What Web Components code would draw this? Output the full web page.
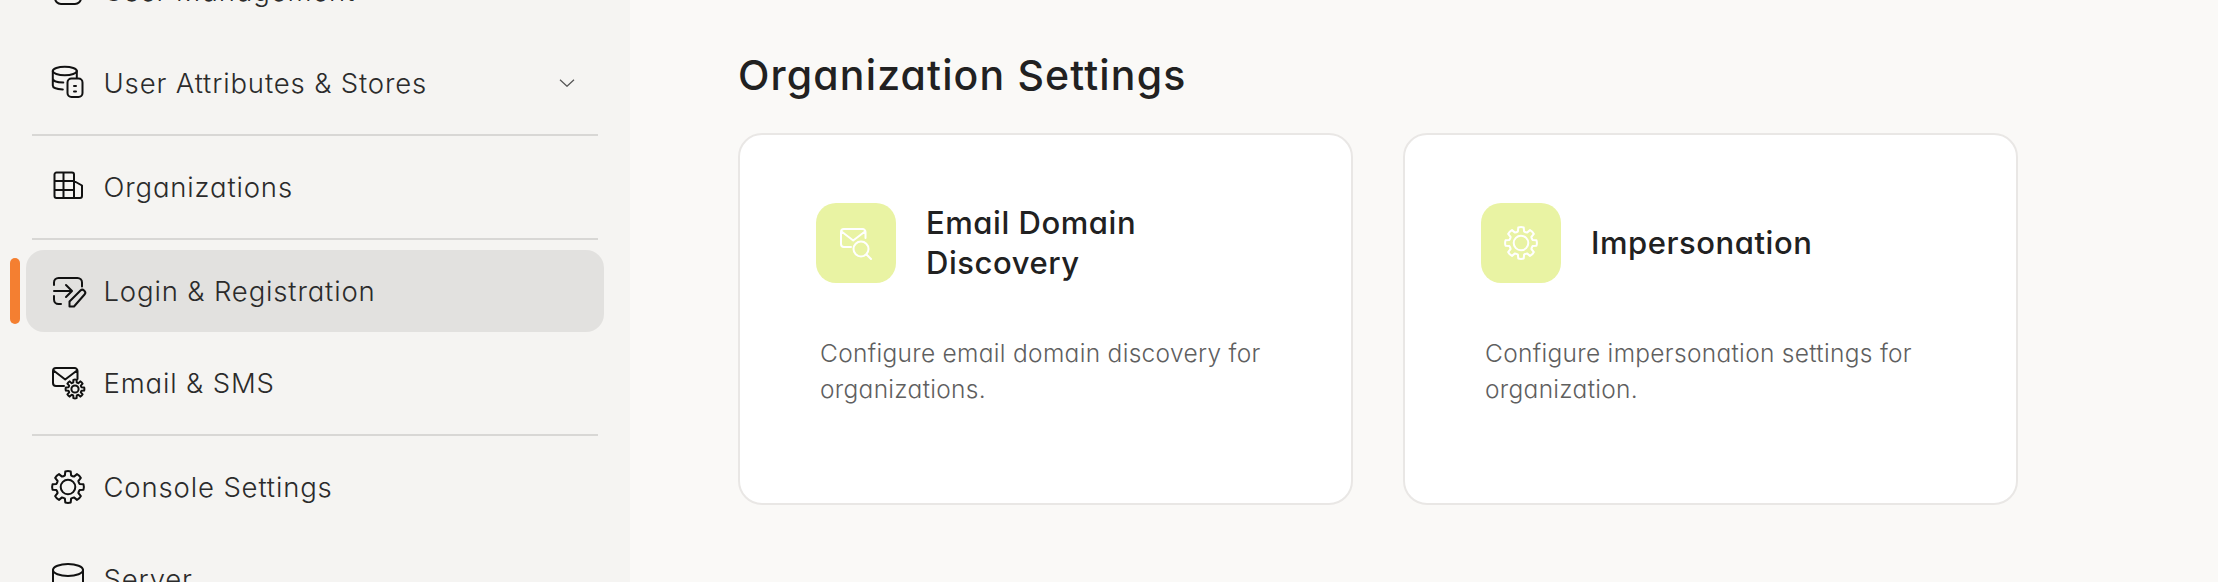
<!DOCTYPE html>
<html><head><meta charset="utf-8"><title>Organization Settings</title>
<style>
html,body{margin:0;padding:0;height:100%;overflow:hidden;background:#faf9f7}
body{font-family:"Inter","Liberation Sans",sans-serif;font-feature-settings:"cv11","ss03";color:#262626}
</style></head>
<body>
<app-shell>
  <side-bar slot="side">
    <nav-item icon="user" label="User Management"></nav-item>
    <nav-item icon="attrs" label="User Attributes &amp; Stores" chevron></nav-item>
    <nav-sep></nav-sep>
    <nav-item icon="org" label="Organizations"></nav-item>
    <nav-sep></nav-sep>
    <nav-item icon="login" label="Login &amp; Registration" active></nav-item>
    <nav-item icon="mail" label="Email &amp; SMS"></nav-item>
    <nav-sep></nav-sep>
    <nav-item icon="gear" label="Console Settings"></nav-item>
    <nav-item icon="server" label="Server"></nav-item>
  </side-bar>
  <settings-page heading="Organization Settings">
    <settings-card icon="mailsearch" title-text="Email Domain Discovery" desc="Configure email domain discovery for organizations."></settings-card>
    <settings-card icon="gear" title-text="Impersonation" desc="Configure impersonation settings for organization."></settings-card>
  </settings-page>
</app-shell>
<script>
function gear(cx,cy,ro,ri,hole){
  const P=(r,d)=>{const t=(d-90)*Math.PI/180;return (cx+r*Math.cos(t)).toFixed(2)+' '+(cy+r*Math.sin(t)).toFixed(2)};
  let d='';
  for(let i=0;i<8;i++){
    const a=i*45;
    d+=(i?'L':'M')+P(ri,a-15)+'L'+P(ro,a-10)+'Q'+P(ro*1.04,a)+' '+P(ro,a+10)+'L'+P(ri,a+15)+'Q'+P(ri*.96,a+22.5)+' '+P(ri,a+30);
  }
  d+='Z';
  return `<path d="${d}"/><circle cx="${cx}" cy="${cy}" r="${hole}"/>`;
}
const ICONS={
  user:`<path d="M4 12v12a6 6 0 0 0 6 6h14a6 6 0 0 0 6-6V12"/>`,
  attrs:`<ellipse cx="13.8" cy="5" rx="12" ry="4.2"/><path d="M1.8 5v14.5c0 2 3.5 3.800 10 4M1.800 12.500c0 2.200 3.800 4 10.500 4M25.800 5v6.500"/><rect x="16.500" y="12.500" width="15" height="18.500" rx="4"/><path d="M23 20h2M23 25.500h2"/>`,
  org:`<path d="M23 11V4.500a2 2 0 0 0-2-2H5.500a2 2 0 0 0-2 2V26a2 2 0 0 0 2 2H29a2 2 0 0 0 2-2V15.500L23 11ZM23 11V28M12.500 2.500V28M3.500 11H23M3.500 20H23"/>`,
  login:`<path d="M3 11V8.500A4.500 4.500 0 0 1 7.500 4h19A4.500 4.500 0 0 1 31 8.500v4M3 22v3.500A4.500 4.500 0 0 0 7.500 30H10M3 17h17.500M15 11l6 6-6 6"/><path d="M18.500 32.500v-5L29.500 16.500a2.500 2.500 0 0 1 3.500 0l.5.5a2.500 2.500 0 0 1 0 3.500L23 32.500Z"/>`,
  mail:`<path d="M13 20H5a3 3 0 0 1-3-3V5a3 3 0 0 1 3-3h18.500a3 3 0 0 1 3 3v8M2.500 4.500 14.200 13.500 26 4.500"/>${gear(24,23,9.300,6.700,3.600)}`,
  mailsearch:`<path d="M12 21H5a3 3 0 0 1-3-3V6a3 3 0 0 1 3-3h18.500a3 3 0 0 1 3 3v6M2.500 5.500 14.200 14.500 26 5.500"/><circle cx="22" cy="23" r="7.500"/><path d="M27.500 28.500 32 33"/>`,
  gear:gear(17,17,15.700,12,7.300),
  server:`<ellipse cx="17" cy="8" rx="15" ry="6"/><path d="M2 8v30M32 8v30"/>`
};
class AppIcon extends HTMLElement{
  connectedCallback(){
    const s=this.attachShadow({mode:'open'});
    s.innerHTML=`<style>:host{display:block;width:34px;height:34px;flex:none;color:inherit}
    svg{display:block;overflow:visible;fill:none;stroke:currentColor;stroke-width:2;stroke-linecap:round;stroke-linejoin:round}</style>
    <svg width="34" height="34" viewBox="0 0 34 34">${ICONS[this.getAttribute('name')]}</svg>`;
  }
}
customElements.define('app-icon',AppIcon);
class AppShell extends HTMLElement{
  constructor(){super();this.attachShadow({mode:'open'}).innerHTML=`<style>
  :host{display:flex;width:100%;height:582px;overflow:hidden;background:#faf9f7}
  </style><slot name="side"></slot><slot></slot>`}
}
customElements.define('app-shell',AppShell);
class SideBar extends HTMLElement{
  constructor(){super();this.attachShadow({mode:'open'}).innerHTML=`<style>
  :host{display:block;flex:none;width:630px;height:582px;overflow:hidden;background:#f5f4f2;box-sizing:border-box}
  .list{display:flex;flex-direction:column;gap:10px;margin-top:-50px;padding:0 26px}
  </style><div class="list"><slot></slot></div>`}
}
customElements.define('side-bar',SideBar);
class NavSep extends HTMLElement{
  constructor(){super();this.attachShadow({mode:'open'}).innerHTML=`<style>
  :host{display:block;height:2px;margin:0 6px;background:#d8d7d5;flex:none}</style>`}
}
customElements.define('nav-sep',NavSep);
class NavItem extends HTMLElement{
  connectedCallback(){
    const active=this.hasAttribute('active');
    this.attachShadow({mode:'open'}).innerHTML=`<style>
    :host{display:flex;align-items:center;position:relative;height:82px;flex:none;box-sizing:border-box;padding:0 29px 0 25px;border-radius:18px;
      background:${active?'#e2e1df':'transparent'};color:#111}
    .t{margin-left:18.5px;font-size:27.5px;font-weight:300;letter-spacing:.85px;color:#2b2b2b;white-space:nowrap;flex:1}
    .bar{position:absolute;left:-16px;top:8px;bottom:8px;width:10px;border-radius:5px;background:#f47f31}
    .ch{display:block;flex:none}
    </style>${active?'<span class="bar"></span>':''}
    <app-icon name="${this.getAttribute('icon')}"></app-icon>
    <span class="t">${this.getAttribute('label').replace('&','&amp;')}</span>
    ${this.hasAttribute('chevron')?'<svg class="ch" width="16" height="8" viewBox="0 0 16 8" fill="none" stroke="#555" stroke-width="1.2"><path d="M1 .7 8 7.300 15 .7"/></svg>':''}`;
  }
}
customElements.define('nav-item',NavItem);
class SettingsPage extends HTMLElement{
  connectedCallback(){
    this.attachShadow({mode:'open'}).innerHTML=`<style>
    :host{display:block;flex:1;min-width:0;box-sizing:border-box;padding:50px 0 0 108px}
    h1{margin:0 0 32px 0;font-size:41px;line-height:51px;font-weight:500;letter-spacing:1.15px;color:#212121;white-space:nowrap}
    .cards{display:flex;gap:50px}
    </style><h1>${this.getAttribute('heading')}</h1><div class="cards"><slot></slot></div>`;
  }
}
customElements.define('settings-page',SettingsPage);
class SettingsCard extends HTMLElement{
  connectedCallback(){
    this.attachShadow({mode:'open'}).innerHTML=`<style>
    :host{display:block;flex:none;width:615px;height:372px;box-sizing:border-box;background:#fff;border:2px solid #e9e7e5;border-radius:24px;padding:68px 60px 0 76px}
    .head{display:flex;align-items:center;gap:30px}
    .ic{width:80px;height:80px;flex:none;border-radius:20px;background:#e9f3a3;color:#fff;display:flex;align-items:center;justify-content:center}
    h2{margin:0;max-width:300px;font-size:31px;line-height:40px;font-weight:500;letter-spacing:.55px;color:#212121}
    p{margin:52px 0 0 4px;font-size:24.5px;line-height:36px;font-weight:300;letter-spacing:.3px;color:#5f5f5f}
    </style><div class="head"><div class="ic"><app-icon name="${this.getAttribute('icon')}"></app-icon></div><h2>${this.getAttribute('title-text')}</h2></div>
    <p>${this.getAttribute('desc')}</p>`;
  }
}
customElements.define('settings-card',SettingsCard);
</script>
</body></html>
